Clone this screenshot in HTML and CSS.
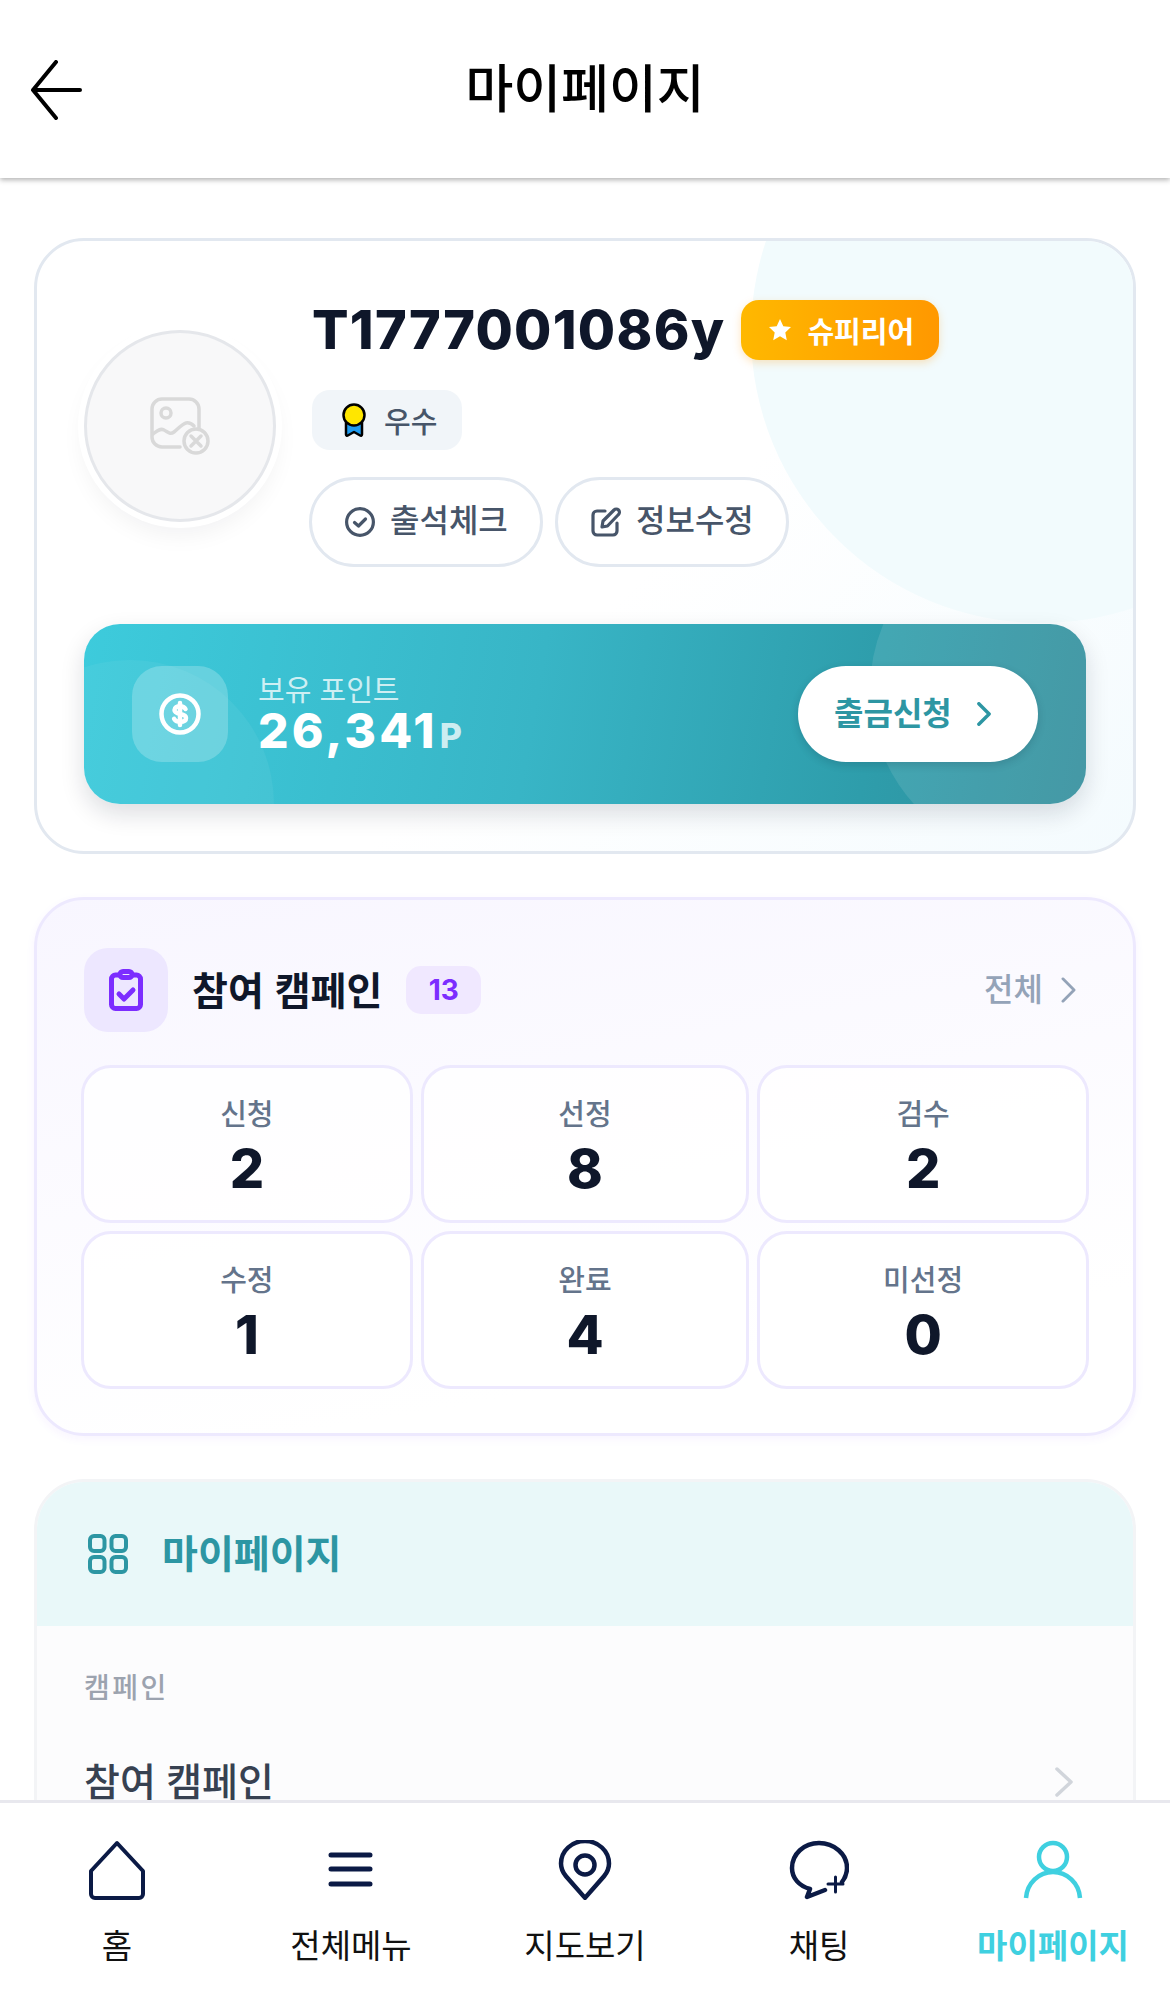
FILE: index.html
```html
<!DOCTYPE html>
<html lang="ko">
<head>
  <meta charset="UTF-8">
  <meta name="viewport" content="width=device-width, initial-scale=1.0">
  <title>마이페이지</title>
  <link rel="stylesheet" href="styles.css">
</head>
<body>
  <div class="app">
    <header class="top-bar">
      <svg class="back-icon" viewBox="0 0 54 60" fill="none" stroke="#000" stroke-width="4" stroke-linecap="round" stroke-linejoin="round">
        <path d="M26 2 3 30l23 28M3 30h47"/>
      </svg>
      <h1>마이페이지</h1>
    </header>

    <main class="content">
      <section class="card profile-card">
        <div class="profile-row">
          <div class="avatar">
            <svg viewBox="0 0 60 58" width="60" height="58" fill="none" stroke="#d9d9d9" stroke-width="3.5" stroke-linecap="round" stroke-linejoin="round">
              <path d="M30 50H12a10 10 0 0 1-10-10V12A10 10 0 0 1 12 2h27a10 10 0 0 1 10 10v19"/>
              <circle cx="16" cy="16" r="5"/>
              <path d="M3 37c4-3 7-6 11-4s6 5 10 2 8-8 12-9 6 1 8 3"/>
              <circle cx="46" cy="44" r="12"/>
              <path d="m41 39 10 10m0-10L41 49"/>
            </svg>
          </div>
          <div class="profile-info">
            <div class="name-row">
              <span class="user-name">T1777001086y</span>
              <span class="tier-badge">
                <svg viewBox="0 0 24 24" width="24" height="24" fill="#fff"><path d="m12 1 3.3 7.2 7.7.9-5.700 5.300 1.500 7.800L12 18.300l-6.800 3.900 1.500-7.800L1 9.100l7.700-.9z"/></svg>
                슈피리어
              </span>
            </div>
            <div class="grade-chip">
              <svg viewBox="0 0 24 34" width="24" height="34">
                <path d="M4 18v13.500c0 1 1 1.500 1.800 1L12 29l6.200 3.500c.8.500 1.800 0 1.800-1V18z" fill="#1e9bf0" stroke="#000" stroke-width="2.500" stroke-linejoin="round"/>
                <circle cx="12" cy="12" r="10.500" fill="#ffe600" stroke="#000" stroke-width="2.500"/>
              </svg>
              우수
            </div>
            <div class="profile-actions">
              <button class="pill-btn" type="button">
                <svg viewBox="0 0 30 30" width="30" height="30" fill="none" stroke="#475569" stroke-width="3.200" stroke-linecap="round" stroke-linejoin="round">
                  <circle cx="15" cy="15" r="13.400"/><path d="m9.500 15.500 4 3.500 7-7"/>
                </svg>
                <span>출석체크</span>
              </button>
              <button class="pill-btn" type="button">
                <svg viewBox="0 0 30 30" width="30" height="30" fill="none" stroke="#475569" stroke-width="3.200" stroke-linecap="round" stroke-linejoin="round">
                  <path d="M14 4H6a4 4 0 0 0-4 4v16a4 4 0 0 0 4 4h16a4 4 0 0 0 4-4v-8"/>
                  <path d="m11 20 1-6L23 3a3 3 0 0 1 4.500 4.500L16.500 19z"/>
                </svg>
                <span>정보수정</span>
              </button>
            </div>
          </div>
        </div>

        <div class="point-card">
          <div class="point-icon">
            <svg viewBox="0 0 42 42" width="42" height="42" fill="none" stroke="#fff" stroke-linecap="round" stroke-linejoin="round">
              <circle cx="21" cy="21" r="18.500" stroke-width="4.500"/>
              <path d="M26.500 16c-1-1.800-3-2.800-5.500-2.800-3 0-5.500 1.400-5.500 3.900 0 5.500 11.500 2.400 11.500 7.900 0 2.700-2.800 3.900-6 3.900-2.600 0-4.900-.9-5.900-3M21 10v22" stroke-width="4.500"/>
            </svg>
          </div>
          <div class="point-text">
            <div class="point-label">보유 포인트</div>
            <div class="point-value">26,341<span>P</span></div>
          </div>
          <button class="withdraw-btn" type="button">
            <span>출금신청</span>
            <svg viewBox="0 0 16 28" width="14" height="24" fill="none" stroke="#2d96a3" stroke-width="4" stroke-linecap="round" stroke-linejoin="round"><path d="m2 2 12 12L2 26"/></svg>
          </button>
        </div>
      </section>

      <section class="card campaign-card">
        <div class="campaign-head">
          <div class="clip-icon">
            <svg viewBox="0 0 34 42" width="34" height="42" fill="none" stroke="#7c2dff" stroke-width="5" stroke-linecap="round" stroke-linejoin="round">
              <path d="M9 6H6.500a4 4 0 0 0-4 4v25.500a4 4 0 0 0 4 4h21a4 4 0 0 0 4-4V10a4 4 0 0 0-4-4H25"/>
              <rect x="11" y="2.500" width="12" height="6" rx="3"/>
              <path d="m10 25 5 5 9-9"/>
            </svg>
          </div>
          <h2>참여 캠페인</h2>
          <span class="count-badge">13</span>
          <a class="see-all">
            <span>전체</span>
            <svg viewBox="0 0 16 28" width="15" height="26" fill="none" stroke="#94a3b8" stroke-width="3" stroke-linecap="round" stroke-linejoin="round"><path d="m2 2 12 12L2 26"/></svg>
          </a>
        </div>
        <div class="stat-grid">
          <div class="stat"><span class="stat-label">신청</span><strong>2</strong></div>
          <div class="stat"><span class="stat-label">선정</span><strong>8</strong></div>
          <div class="stat"><span class="stat-label">검수</span><strong>2</strong></div>
          <div class="stat"><span class="stat-label">수정</span><strong>1</strong></div>
          <div class="stat"><span class="stat-label">완료</span><strong>4</strong></div>
          <div class="stat"><span class="stat-label">미선정</span><strong>0</strong></div>
        </div>
      </section>

      <section class="menu-card">
        <div class="menu-head">
          <svg viewBox="0 0 40 40" width="40" height="40" fill="none" stroke="#2d96a3" stroke-width="4" stroke-linejoin="round">
            <rect x="2" y="2" width="14.500" height="15" rx="4"/><rect x="23.500" y="2" width="14.500" height="15" rx="4"/>
            <rect x="2" y="23" width="14.500" height="15" rx="4"/><rect x="23.500" y="23" width="14.500" height="15" rx="4"/>
          </svg>
          <h2>마이페이지</h2>
        </div>
        <div class="menu-body">
          <div class="menu-group">캠페인</div>
          <div class="menu-item">
            참여 캠페인
            <svg viewBox="0 0 18 30" width="18" height="30" fill="none" stroke="#d1d5db" stroke-width="3.500" stroke-linecap="round" stroke-linejoin="round"><path d="m2 2 14 13L2 28"/></svg>
          </div>
        </div>
      </section>
    </main>

    <nav class="bottom-nav">
      <a class="nav-item">
        <svg viewBox="0 0 60 60" width="60" height="60" fill="none" stroke="#0b1a45" stroke-width="4" stroke-linejoin="round">
          <path d="M30 3 4 31v23a4 4 0 0 0 4 4h44a4 4 0 0 0 4-4V31z"/>
        </svg>
        <span>홈</span>
      </a>
      <a class="nav-item">
        <svg viewBox="0 0 60 60" width="60" height="60" fill="none" stroke="#0b1a45" stroke-width="5" stroke-linecap="round">
          <path d="M10 15h39M10 29h39M10 44h39"/>
        </svg>
        <span>전체메뉴</span>
      </a>
      <a class="nav-item">
        <svg viewBox="0 0 60 60" width="60" height="60" fill="none" stroke="#0b1a45" stroke-width="4.500" stroke-linejoin="round">
          <path d="M30 58 11 36C6 30 6 24 6 23 6 10 17 0 30 0s24 10 24 23c0 1 0 7-5 13z" transform="translate(0 1) scale(1 .98)"/>
          <circle cx="30" cy="25" r="9.500"/>
        </svg>
        <span>지도보기</span>
      </a>
      <a class="nav-item">
        <svg viewBox="0 0 60 60" width="60" height="60" fill="none" stroke="#0b1a45" stroke-linecap="round" stroke-linejoin="round">
          <path d="M53 42c3-4 5-9 5-14C58 14 45 3 30 3S3 14 3 28c0 10 7 18 18 21l-3 8 18-7" stroke-width="4.500"/>
          <path d="M39 44h15M46.500 37v15" stroke-width="3"/>
        </svg>
        <span>채팅</span>
      </a>
      <a class="nav-item active">
        <svg viewBox="0 0 60 60" width="60" height="60" fill="none" stroke="#3fd0e0" stroke-width="4.500">
          <circle cx="30" cy="17" r="14"/>
          <path d="M3 58c1-15 13-26 27-26s26 11 27 26"/>
        </svg>
        <span>마이페이지</span>
      </a>
    </nav>
  </div>
</body>
</html>
```

FILE: styles.css
```css
* {
  box-sizing: border-box;
}
body {
  margin: 0;
  font-family: Inter, "Noto Sans CJK KR", sans-serif;
  background-color: #fff;
  color: #0f172a;
}
h1, h2 {
  margin: 0;
}
button {
  font-family: inherit;
  cursor: pointer;
}
.app {
  display: flex;
  flex-direction: column;
  height: 100vh;
  overflow: hidden;
}

/* header */
.top-bar {
  display: flex;
  align-items: center;
  justify-content: center;
  flex: none;
  position: relative;
  z-index: 1;
  height: 178px;
  background: #fff;
  box-shadow: 0 2px 5px rgba(0, 0, 0, 0.3);
}
.top-bar h1 {
  font-family: "Noto Sans CJK KR", sans-serif;
  font-size: 52px;
  font-weight: 500;
  color: #000;
  margin-bottom: 8px;
}
.back-icon {
  position: absolute;
  left: 30px;
  top: 60px;
  width: 54px;
  height: 60px;
}

.content {
  flex: 1;
  min-height: 0;
  overflow: hidden;
  padding: 60px 34px 0;
}

/* cards */
.card {
  position: relative;
  overflow: hidden;
  border: 3px solid #e2e8f0;
  border-radius: 50px;
  margin-bottom: 43px;
}
.profile-card {
  padding: 59px 47px 47px;
  background: linear-gradient(135deg, #fff 55%, #f4fbfe);
}
.profile-card::before {
  content: "";
  position: absolute;
  left: 714px;
  top: -198px;
  width: 580px;
  height: 580px;
  border-radius: 50%;
  background: #f2fbfd;
}
.profile-row {
  display: flex;
  position: relative;
  gap: 36px;
}
.avatar {
  display: flex;
  align-items: center;
  justify-content: center;
  flex: none;
  width: 192px;
  height: 192px;
  margin-top: 30px;
  border: 3px solid #e5e7eb;
  border-radius: 50%;
  background: #f8f8f9;
  box-shadow: 0 0 0 6px #fff, 0 12px 24px rgba(15, 23, 42, 0.06);
}
.name-row {
  display: flex;
  align-items: center;
  gap: 16px;
  height: 60px;
}
.user-name {
  font-size: 54px;
  font-weight: 800;
  line-height: 60px;
  letter-spacing: 1.3px;
}
.tier-badge {
  display: flex;
  align-items: center;
  gap: 15px;
  height: 60px;
  padding: 0 25px 0 27px;
  border-radius: 18px;
  background: linear-gradient(90deg, #ffb800, #ff9800);
  color: #fff;
  font-size: 29px;
  font-weight: 700;
  box-shadow: 0 3px 8px rgba(255, 152, 0, 0.25);
}
.grade-chip {
  display: flex;
  align-items: center;
  gap: 18px;
  width: 150px;
  height: 60px;
  margin-top: 30px;
  padding-left: 30px;
  border-radius: 18px;
  background: #f1f5f9;
  color: #475569;
  font-size: 29px;
  font-weight: 500;
}
.profile-actions {
  display: flex;
  gap: 12px;
  margin: 27px 0 0 -3px;
}
.pill-btn {
  display: flex;
  align-items: center;
  gap: 15px;
  width: 234px;
  height: 90px;
  padding: 0 0 0 33px;
  border: 3px solid #e2e8f0;
  border-radius: 45px;
  background: #fff;
  color: #475569;
  font-size: 32px;
  font-weight: 500;
}
.pill-btn span {
  margin-bottom: 9px;
}

/* point box */
.point-card {
  display: flex;
  align-items: center;
  position: relative;
  overflow: hidden;
  height: 180px;
  margin-top: 57px;
  padding: 0 48px;
  border-radius: 36px;
  background: linear-gradient(100deg, #3dcbdc, #38b5c6 45%, #2e9dab 78%, #308d9b);
  box-shadow: 0 10px 24px rgba(15, 23, 42, 0.14);
}
.point-card::before,
.point-card::after {
  content: "";
  position: absolute;
  border-radius: 50%;
}
.point-card::before {
  left: -98px;
  bottom: -144px;
  width: 288px;
  height: 288px;
  background: rgba(255, 255, 255, 0.05);
}
.point-card::after {
  left: 786px;
  top: -104px;
  width: 340px;
  height: 340px;
  background: rgba(255, 255, 255, 0.1);
}
.point-icon {
  display: flex;
  align-items: center;
  justify-content: center;
  flex: none;
  position: relative;
  width: 96px;
  height: 96px;
  border-radius: 30px;
  background: rgba(255, 255, 255, 0.22);
}
.point-text {
  position: relative;
  margin-left: 30px;
  padding-top: 3px;
  color: #fff;
}
.point-label {
  font-family: "Noto Sans CJK KR", sans-serif;
  font-size: 29px;
  line-height: 36px;
  color: rgba(255, 255, 255, 0.75);
}
.point-value {
  font-size: 48px;
  font-weight: 800;
  line-height: 50px;
  letter-spacing: 3.2px;
}
.point-value span {
  margin-left: 2px;
  font-size: 34px;
  letter-spacing: 0;
  color: rgba(255, 255, 255, 0.75);
}
.withdraw-btn {
  display: flex;
  align-items: center;
  gap: 25px;
  position: relative;
  z-index: 1;
  width: 240px;
  height: 96px;
  margin-left: auto;
  padding: 0 0 0 36px;
  border: none;
  border-radius: 48px;
  background: #fff;
  color: #2d96a3;
  font-size: 32px;
  font-weight: 700;
  box-shadow: 0 3px 8px rgba(15, 23, 42, 0.16);
}
.withdraw-btn span {
  margin-bottom: 7px;
}

/* campaign */
.campaign-card {
  height: 539px;
  padding: 48px 44px;
  border-color: #ede9fe;
  background: linear-gradient(170deg, #f8f6ff, #fff 80%);
  box-shadow: 0 3px 10px rgba(124, 45, 255, 0.05);
}
.campaign-head {
  display: flex;
  align-items: center;
  padding-left: 3px;
  height: 84px;
}
.clip-icon {
  display: flex;
  align-items: center;
  justify-content: center;
  width: 84px;
  height: 84px;
  border-radius: 24px;
  background: #ede7ff;
}
.campaign-head h2 {
  margin: 0 0 5px 24px;
  font-family: "Noto Sans CJK KR", sans-serif;
  font-size: 39px;
  font-weight: 700;
}
.count-badge {
  display: flex;
  align-items: center;
  justify-content: center;
  width: 75px;
  height: 48px;
  margin-left: 24px;
  border-radius: 15px;
  background: #f0e8ff;
  color: #7c2dff;
  font-size: 28px;
  font-weight: 700;
}
.see-all {
  display: flex;
  align-items: center;
  gap: 18px;
  margin-left: auto;
  margin-right: 13px;
  color: #94a3b8;
  font-size: 32px;
  font-weight: 500;
}
.see-all span {
  margin-bottom: 6px;
}
.stat-grid {
  display: grid;
  grid-template-columns: 1fr 0.99fr 1fr;
  grid-auto-rows: 158px;
  gap: 8px;
  margin-top: 33px;
}
.stat {
  display: flex;
  flex-direction: column;
  align-items: center;
  padding-top: 30px;
  border: 3px solid #ede9fe;
  border-radius: 30px;
  background: rgba(255, 255, 255, 0.8);
}
.stat-label {
  color: #64748b;
  font-size: 29px;
  font-weight: 500;
  line-height: 34px;
}
.stat strong {
  margin-top: 10px;
  font-size: 54px;
  font-weight: 800;
  line-height: 54px;
}

/* menu */
.menu-card {
  overflow: hidden;
  border: 3px solid #f3f4f6;
  border-bottom: none;
  border-radius: 50px 50px 0 0;
  background: #fcfcfd;
}
.menu-head {
  display: flex;
  align-items: center;
  gap: 34px;
  height: 144px;
  padding-left: 51px;
  background: #e9f8f9;
}
.menu-head h2 {
  margin-bottom: 6px;
  font-size: 39px;
  font-weight: 700;
  color: #2d96a3;
}
.menu-body {
  padding: 44px 47px 0;
}
.menu-group {
  color: #9ca3af;
  font-size: 28px;
  font-weight: 500;
  line-height: 36px;
  letter-spacing: 2.5px;
}
.menu-item {
  display: flex;
  align-items: center;
  justify-content: space-between;
  margin-top: 52px;
  padding-right: 13px;
  color: #374151;
  font-size: 39px;
  font-weight: 500;
  line-height: 48px;
}

/* bottom tabs */
.bottom-nav {
  display: grid;
  grid-template-columns: repeat(5, 1fr);
  flex: none;
  position: relative;
  height: 192px;
  border-top: 3px solid #e8e8ee;
  background: #fff;
}
.nav-item {
  display: flex;
  flex-direction: column;
  align-items: center;
  padding-top: 37px;
  color: #111;
  font-size: 33px;
  line-height: 40px;
}
.nav-item span {
  margin-top: 26px;
}
.nav-item.active {
  color: #3fd0e0;
  font-weight: 700;
}
```
